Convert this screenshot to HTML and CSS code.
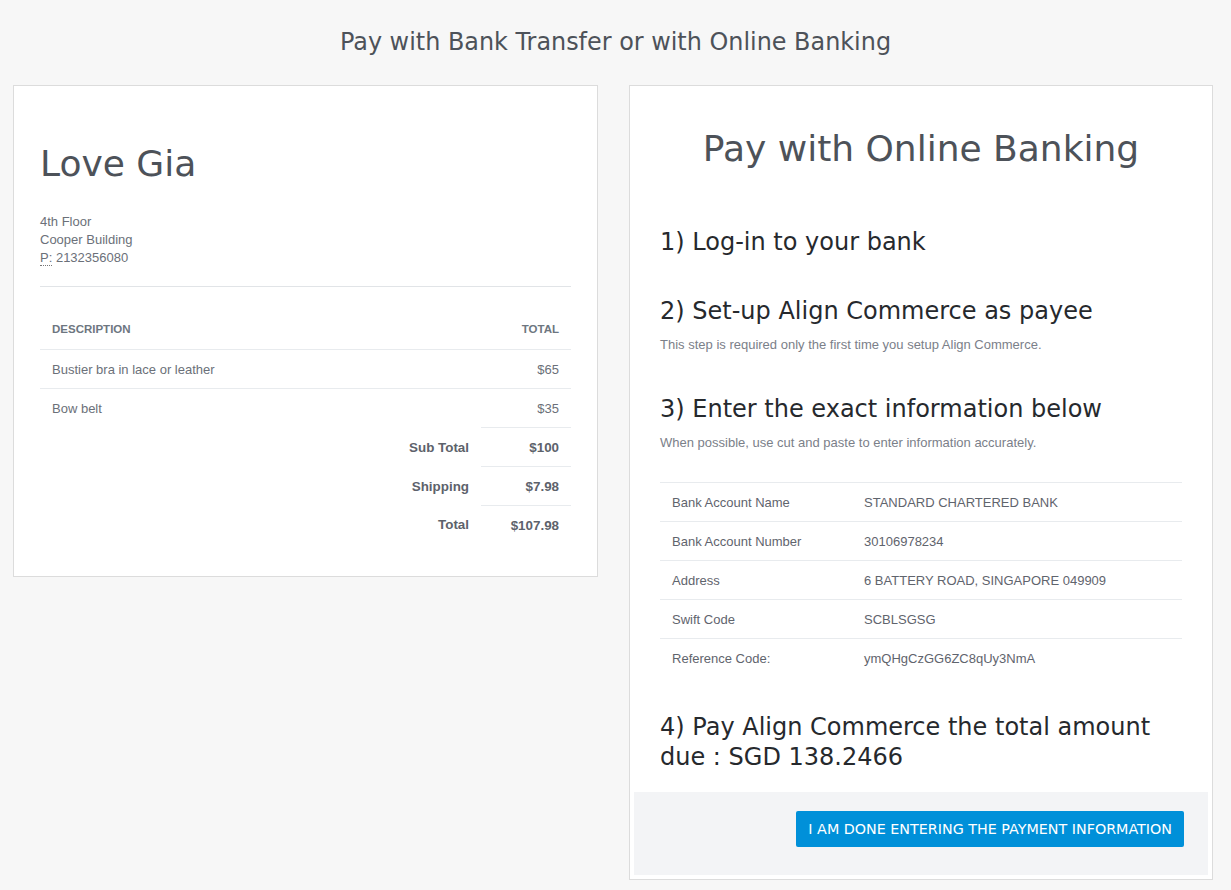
FILE: index.html
```html
<!DOCTYPE html>
<html>
<head>
<meta charset="utf-8">
<link rel="stylesheet" href="styles.css">
</head>
<body>
<h1 class="page-title">Pay with Bank Transfer or with Online Banking</h1>
<div class="columns">
  <div class="card invoice">
    <h2 class="shop-name">Love Gia</h2>
    <address class="addr">
      4th Floor<br>
      Cooper Building<br>
      <abbr title="Phone">P:</abbr> 2132356080
    </address>
    <hr class="sep">
    <table class="items">
      <thead>
        <tr><th class="left">Description</th><th class="right">Total</th></tr>
      </thead>
      <tbody>
        <tr class="line"><td>Bustier bra in lace or leather</td><td class="right">$65</td></tr>
        <tr class="line last"><td>Bow belt</td><td class="right">$35</td></tr>
        <tr class="sum"><td class="right label">Sub Total</td><td class="right val">$100</td></tr>
        <tr class="sum"><td class="right label">Shipping</td><td class="right val">$7.98</td></tr>
        <tr class="sum"><td class="right label">Total</td><td class="right val">$107.98</td></tr>
      </tbody>
    </table>
  </div>
  <div class="card banking">
    <div class="banking-body">
      <h2 class="bank-title">Pay with Online Banking</h2>
      <h3 class="step first">1) Log-in to your bank</h3>
      <h3 class="step">2) Set-up Align Commerce as payee</h3>
      <p class="note">This step is required only the first time you setup Align Commerce.</p>
      <h3 class="step after-note">3) Enter the exact information below</h3>
      <p class="note">When possible, use cut and paste to enter information accurately.</p>
      <table class="info">
        <tr><td class="k">Bank Account Name</td><td>STANDARD CHARTERED BANK</td></tr>
        <tr><td class="k">Bank Account Number</td><td>30106978234</td></tr>
        <tr><td class="k">Address</td><td>6 BATTERY ROAD, SINGAPORE 049909</td></tr>
        <tr><td class="k">Swift Code</td><td>SCBLSGSG</td></tr>
        <tr><td class="k">Reference Code:</td><td>ymQHgCzGG6ZC8qUy3NmA</td></tr>
      </table>
      <h3 class="step last">4) Pay Align Commerce the total amount due : SGD 138.2466</h3>
    </div>
    <div class="footer">
      <button class="done">I AM DONE ENTERING THE PAYMENT INFORMATION</button>
    </div>
  </div>
</div>
</body>
</html>
```

FILE: styles.css
```css
html, body {
  margin: 0;
  padding: 0;
  background: #f7f7f7;
}
body {
  font-family: "Liberation Sans", Arial, sans-serif;
  color: #6b7079;
}
.page-title {
  margin: 0;
  padding-top: 27px;
  height: 58px;
  box-sizing: border-box;
  text-align: center;
  font-family: "DejaVu Sans", Verdana, sans-serif;
  font-weight: normal;
  font-size: 23.9px;
  line-height: 30px;
  color: #4d5259;
}
.columns {
  display: flex;
  align-items: flex-start;
  gap: 31px;
  padding: 27px 18px 10px 13px;
}
.card {
  background: #fff;
  border: 1px solid #dcdcdc;
  box-sizing: border-box;
}
.invoice {
  width: 586px;
  padding: 56px 26px 36px 26px;
  height: 492px;
}
.shop-name {
  margin: 0;
  font-family: "DejaVu Sans", Verdana, sans-serif;
  font-weight: normal;
  font-size: 36px;
  line-height: 44px;
  color: #4d5259;
}
.addr {
  font-style: normal;
  font-size: 13px;
  line-height: 18px;
  margin-top: 27px;
  color: #6b7079;
}
.addr abbr {
  text-decoration: none;
  border-bottom: 1px dotted #777;
}
.sep {
  border: 0;
  border-top: 1px solid #e1e4e7;
  margin: 19px 0 0 0;
}
.items {
  width: 100%;
  border-collapse: collapse;
  margin-top: 22px;
  font-size: 13px;
}
.items th {
  font-size: 11.5px;
  font-weight: bold;
  text-transform: uppercase;
  color: #6d7680;
  padding: 0 12px;
  height: 40px;
  border-bottom: 1px solid #e8ebee;
}
.items td {
  padding: 0 12px;
  height: 38px;
}
.items .line td {
  border-bottom: 1px solid #e8ebee;
}
.items .line.last td {
  border-bottom: 0;
}
.items .left { text-align: left; }
.items .right { text-align: right; }
.items .sum td {
  font-weight: bold;
  color: #5d626b;
  font-size: 13.4px;
}
.items .sum .val {
  border-top: 1px solid #e8ebee;
  width: 66px;
}
.banking {
  width: 585px;
  padding: 0 4px 4px 4px;
}
.banking-body {
  padding: 38px 26px 20px 26px;
}
.bank-title {
  margin: 0;
  text-align: center;
  font-family: "DejaVu Sans", Verdana, sans-serif;
  font-weight: normal;
  font-size: 36px;
  line-height: 50px;
  color: #4d5259;
}
.step {
  margin: 39px 0 0 0;
  font-family: "DejaVu Sans", Verdana, sans-serif;
  font-weight: normal;
  font-size: 24px;
  line-height: 30px;
  color: #26292d;
}
.step.first {
  margin-top: 53px;
}
.step.after-note {
  margin-top: 41px;
}
.step.last {
  margin-top: 35px;
}
.note {
  margin: 11px 0 0 0;
  font-size: 13px;
  line-height: 16px;
  color: #7b8089;
}
.info {
  width: 100%;
  border-collapse: collapse;
  margin-top: 31px;
  font-size: 13px;
  color: #5f646d;
}
.info td {
  border-top: 1px solid #e8ebee;
  height: 38px;
  padding: 0 12px;
}
.info .k {
  width: 168px;
}
.footer {
  background: #f3f4f6;
  padding: 19px 24px 28px;
  display: flex;
  justify-content: flex-end;
}
.done {
  background: #0090d9;
  color: #fff;
  border: 0;
  border-radius: 2px;
  height: 36px;
  padding: 0 12px;
  font-family: "DejaVu Sans", Verdana, sans-serif;
  font-size: 14.3px;
}
```
